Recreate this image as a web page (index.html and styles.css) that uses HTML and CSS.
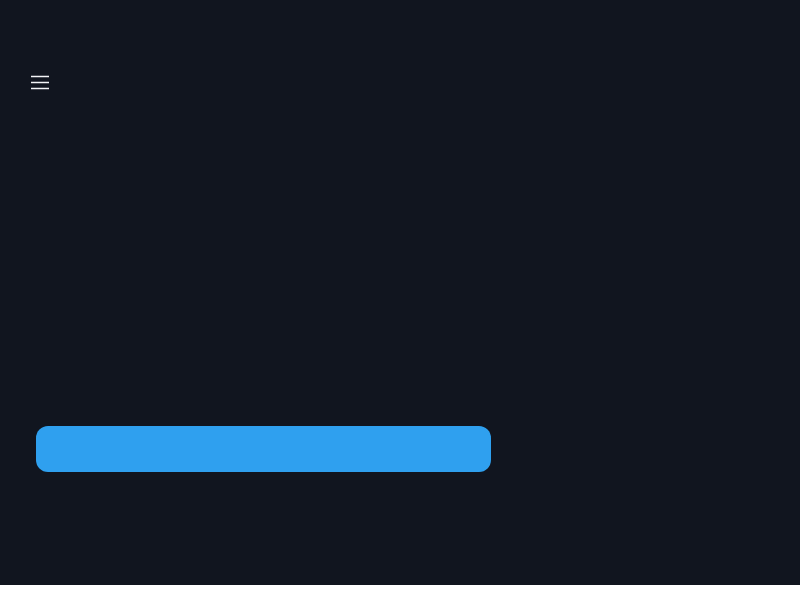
FILE: index.html
```html
<!DOCTYPE html>
<html lang="en">
<head>
  <meta charset="UTF-8" />
  <meta name="viewport" content="width=device-width, initial-scale=1.0"/>
  <title>Menu</title>
  <link rel="stylesheet" href="styles.css">
</head>
<body>

  <div class="screen">
    <header class="topbar">
      <button class="menu-toggle" aria-label="Open menu">
        <svg width="24" height="24" viewBox="0 0 24 24" fill="none" stroke="#f3f4f6" stroke-width="1.6">
          <path d="M3 6.5h18M3 12.5h18M3 18.5h18"/>
        </svg>
      </button>
    </header>

    <main class="content">
      <a href="#" class="cta"></a>
    </main>
  </div>

</body>
</html>
```

FILE: styles.css
```css
body {
  margin: 0;
  background-color: #ffffff;
  font-family: 'Inter', 'Liberation Sans', sans-serif;
}

.screen {
  height: 585px;
  background-color: #11151f;
  display: flex;
  flex-direction: column;
}

.topbar {
  padding: 70px 0 0 28px;
  display: flex;
}

.menu-toggle {
  width: 24px;
  height: 24px;
  padding: 0;
  border: 0;
  background: none;
  cursor: pointer;
}

.menu-toggle svg {
  display: block;
}

.content {
  padding: 332px 0 0 36px;
}

.cta {
  display: block;
  width: 455px;
  height: 46px;
  border-radius: 12px;
  background-color: #2fa0ef;
}
```
